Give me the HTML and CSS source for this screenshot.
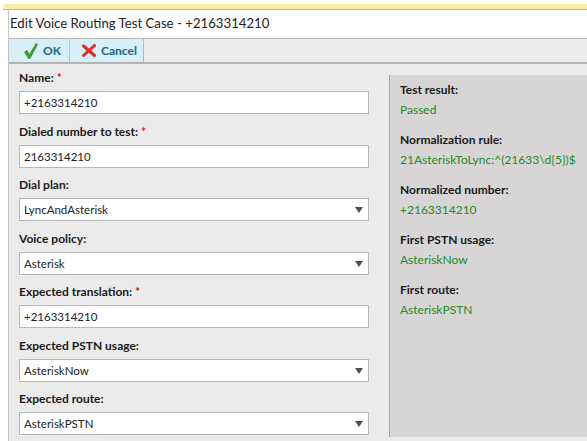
FILE: index.html
```html
<!DOCTYPE html>
<html lang="en">
<head>
    <meta charset="UTF-8">
    <title>Edit Voice Routing Test Case</title>
    <link rel="stylesheet" href="styles.css">
</head>
<body>
    <div class="topbar"></div>
    <div class="dialog">
        <h1 class="title">Edit Voice Routing Test Case - +2163314210</h1>

        <div class="toolbar">
            <button class="tb-btn ok">
                <svg width="14" height="16" viewBox="0 0 14 16">
                    <path d="M0.5 9 L3 7.5 L5.5 11.5 L12 0.5 L13.5 1.5 L6 15.5 L4.5 15.5 Z" fill="#3aa12a" stroke="#2a7a1c" stroke-width="0.6"/>
                </svg>
                OK
            </button>
            <button class="tb-btn cancel">
                <svg width="14" height="13" viewBox="0 0 14 13">
                    <path d="M1.5 2 L12.5 11.5 M12.5 1.5 L1.5 11.5" stroke="#e02a2a" stroke-width="3" stroke-linecap="round"/>
                </svg>
                Cancel
            </button>
        </div>

        <div class="content">
            <form class="fields">
                <div class="field">
                    <label>Name: <span class="req">*</span></label>
                    <input type="text" value="+2163314210">
                </div>
                <div class="field">
                    <label>Dialed number to test: <span class="req">*</span></label>
                    <input type="text" value="2163314210">
                </div>
                <div class="field">
                    <label>Dial plan:</label>
                    <div class="select"><select><option>LyncAndAsterisk</option></select></div>
                </div>
                <div class="field">
                    <label>Voice policy:</label>
                    <div class="select"><select><option>Asterisk</option></select></div>
                </div>
                <div class="field">
                    <label>Expected translation: <span class="req">*</span></label>
                    <input type="text" value="+2163314210">
                </div>
                <div class="field">
                    <label>Expected PSTN usage:</label>
                    <div class="select"><select><option>AsteriskNow</option></select></div>
                </div>
                <div class="field">
                    <label>Expected route:</label>
                    <div class="select"><select><option>AsteriskPSTN</option></select></div>
                </div>
            </form>

            <aside class="result">
                <div class="res-item">
                    <div class="res-label">Test result:</div>
                    <div class="res-value">Passed</div>
                </div>
                <div class="res-item">
                    <div class="res-label">Normalization rule:</div>
                    <div class="res-value">21AsteriskToLync:^(21633\d{5})$</div>
                </div>
                <div class="res-item">
                    <div class="res-label">Normalized number:</div>
                    <div class="res-value">+2163314210</div>
                </div>
                <div class="res-item">
                    <div class="res-label">First PSTN usage:</div>
                    <div class="res-value">AsteriskNow</div>
                </div>
                <div class="res-item">
                    <div class="res-label">First route:</div>
                    <div class="res-value">AsteriskPSTN</div>
                </div>
            </aside>
        </div>
    </div>
</body>
</html>
```

FILE: styles.css
```css
* {
    margin: 0;
    padding: 0;
    box-sizing: border-box;
}
body {
    font-family: Lato, "Open Sans", sans-serif;
    font-size: 12px;
    color: #222;
    background: #fff;
    height: 441px;
    overflow: hidden;
    padding-top: 4px;
}
.topbar {
    margin-left: 3px;
    background: #f8eba6;
    border-top-left-radius: 3px;
    border-bottom: 1px solid #b5b5b5;
    height: 6px;
}
.dialog {
    margin-left: 8px;
    border-left: 1px solid #c4c4c4;
    height: 100%;
    background: #ebebeb;
}
.title {
    height: 28px;
    background: #fff;
    font-size: 13.2px;
    font-weight: normal;
    color: #222;
    line-height: 27px;
    padding-left: 1px;
}
.toolbar {
    display: flex;
    height: 26px;
    border-top: 1px solid #b8b8b8;
    border-bottom: 2px solid #b3b3b3;
    background: #ebebeb;
}
.tb-btn {
    display: flex;
    align-items: center;
    gap: 5px;
    height: 23px;
    border: none;
    border-right: 1px solid #b8c4c8;
    background: #d6eff8;
    font-family: inherit;
    font-size: 12px;
    font-weight: 700;
    color: #1f6584;
}
.ok {
    width: 61px;
    padding-left: 15px;
}
.cancel {
    width: 74px;
    padding-left: 12px;
    border-right: 1px solid #b8b8b8;
}
.content {
    display: flex;
    align-items: flex-start;
}
.fields {
    width: 360px;
    padding: 4px 0 0 10px;
}
.field {
    margin-bottom: 7.5px;
}
.field label {
    display: block;
    height: 20px;
    line-height: 20px;
    margin-bottom: 3px;
    font-weight: 700;
    color: #1a1a1a;
}
.req {
    color: #e01010;
}
.field input,
.field select {
    display: block;
    width: 350px;
    height: 23px;
    border: 1px solid #b9b9b9;
    background: #fff;
    font-family: inherit;
    font-size: 11.5px;
    color: #222;
    padding: 0 4px;
    outline: none;
}
.field select {
    appearance: none;
    -webkit-appearance: none;
    border-radius: 0;
}
.select {
    position: relative;
    width: 350px;
}
.select::after {
    content: "";
    position: absolute;
    right: 6px;
    top: 9px;
    border-left: 4px solid transparent;
    border-right: 4px solid transparent;
    border-top: 6px solid #505050;
}
.result {
    flex: 1;
    margin: 11px 0 0 20px;
    height: 362px;
    background: #d7d5d5;
    border-left: 1px solid #a6a6a6;
    padding: 5px 0 0 10px;
}
.res-item {
    margin-bottom: 10px;
}
.res-label,
.res-value {
    height: 20px;
    line-height: 20px;
}
.res-label {
    font-weight: 700;
    color: #1a1a1a;
}
.res-value {
    color: #268a26;
}
```
